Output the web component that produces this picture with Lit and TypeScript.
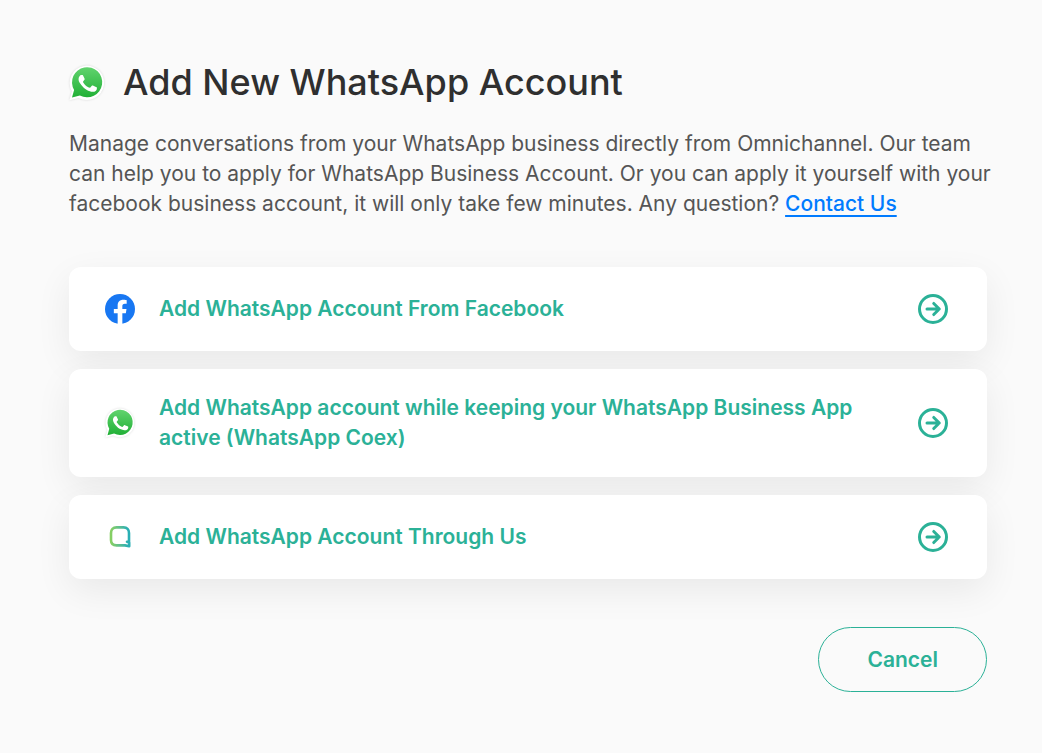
import { LitElement, html, css, svg } from "lit";
import { customElement } from "lit/decorators.js";

const whatsappIcon = (size: number, id: string) => html`
  <svg class="icon" width=${size} height=${size} viewBox="0 0 36 36" aria-hidden="true">
    <defs>
      <linearGradient id=${id} x1="0" y1="0" x2="0" y2="1">
        <stop offset="0" stop-color="#61d36e"></stop>
        <stop offset="1" stop-color="#21b036"></stop>
      </linearGradient>
    </defs>
    ${svg`
      <path class="halo" d="M.4 35.300 2.900 26.300A17.200 17.200 0 1 1 9.600 32.900Z"/>
      <path fill="url(#${id})" d="M3 32.600 5.100 24.900A15.100 15.100 0 1 1 10.900 30.500Z"/>
      <path transform="translate(1.900 1.600) scale(.89)" fill="#fff" d="M13.800 10.200c-.4-.8-.7-.8-1.100-.8h-.9c-.4 0-.9.1-1.400.6s-1.800 1.700-1.800 4.200 1.800 4.900 2.100 5.200c.3.3 3.500 5.600 8.700 7.600 4.300 1.700 5.200 1.300 6.100 1.300s3-1.200 3.400-2.400c.4-1.200.4-2.200.3-2.400-.1-.2-.5-.3-1-.6l-3.500-1.600c-.5-.2-.8-.3-1.200.2l-1.700 2c-.3.4-.6.4-1.100.1s-2.200-.8-4.100-2.500c-1.500-1.400-2.600-3-2.900-3.600-.3-.5 0-.8.2-1.100l1.500-1.900c.2-.3.1-.6 0-.9Z"/>
    `}
  </svg>
`;

const facebookIcon = html`
  <svg class="icon" width="30" height="30" viewBox="0 0 24 24" aria-hidden="true">
    <circle cx="12" cy="12" r="12" fill="#1877f2"></circle>
    <path fill="#fff" d="M16.671 15.469 17.203 12h-3.328V9.749c0-.949.465-1.874 1.956-1.874h1.513V4.922s-1.374-.235-2.686-.235c-2.741 0-4.533 1.662-4.533 4.669V12H7.078v3.469h3.047v8.531h3.750v-8.531Z"></path>
  </svg>
`;

const qontakIcon = html`
  <svg class="icon" width="30" height="30" viewBox="0 0 30 30" aria-hidden="true">
    <defs>
      <linearGradient id="bubble" x1="4" y1="0" x2="26" y2="0" gradientUnits="userSpaceOnUse">
        <stop offset="0.1" stop-color="#86cf63"></stop>
        <stop offset="0.5" stop-color="#5bbd92"></stop>
        <stop offset="0.85" stop-color="#2aafb4"></stop>
      </linearGradient>
    </defs>
    <path fill="none" stroke="url(#bubble)" stroke-width="2.600" stroke-linejoin="round" stroke-linecap="round"
      d="M22 19.800 24 20.500V11C24 7.400 22 5.400 18.500 5.400H11.500C8 5.400 6 7.400 6 11V18C6 21.500 8 23.400 11.500 23.400H20L24.200 24.200V20.500"></path>
  </svg>
`;

const arrowIcon = html`
  <svg class="icon" width="36" height="36" viewBox="0 0 24 24" fill="none" stroke="currentColor"
    stroke-width="2" stroke-linecap="round" stroke-linejoin="round" aria-hidden="true">
    <circle cx="12" cy="12" r="9"></circle>
    <path d="M8 12h8M12.500 8.300 16.200 12l-3.700 3.700"></path>
  </svg>
`;

const options = [
  { label: "Add WhatsApp Account From Facebook", icon: facebookIcon },
  {
    label: "Add WhatsApp account while keeping your WhatsApp Business App active (WhatsApp Coex)",
    icon: whatsappIcon(30, "wa-option"),
  },
  { label: "Add WhatsApp Account Through Us", icon: qontakIcon },
];

@customElement("app-root")
export class AppRoot extends LitElement {
  static styles = css`
    :host {
      display: block;
      box-sizing: border-box;
      min-height: 100vh;
      padding: 60px 55px 60px 69px;
      background: #fafafa;
      color: #555;
      font-family: Inter, "Liberation Sans", sans-serif;
      font-size: 21px;
      line-height: 30px;
    }
    .header {
      display: flex;
      align-items: center;
      gap: 18px;
    }
    .title {
      margin: 0;
      color: #2f2f2f;
      font-size: 36px;
      font-weight: 500;
      line-height: 45px;
    }
    .icon {
      display: block;
      flex: none;
      overflow: visible;
    }
    .halo {
      fill: #fff;
      filter: drop-shadow(0 0 1px rgba(0, 0, 0, 0.14));
    }
    .intro {
      margin: 24px -8px 48px 0;
    }
    .contact {
      color: #007bff;
      font-weight: 500;
      text-decoration: underline 2px;
      text-underline-offset: 4px;
    }
    .options {
      display: flex;
      flex-direction: column;
      gap: 18px;
      margin: 0;
      padding: 0;
      list-style: none;
    }
    .option {
      display: flex;
      align-items: center;
      gap: 24px;
      box-sizing: border-box;
      width: 100%;
      padding: 24px 36px;
      border: 0;
      border-radius: 12px;
      background: #fff;
      box-shadow: 0 12px 36px rgba(0, 0, 0, 0.07);
      color: #2bb197;
      font: inherit;
      font-weight: 600;
      text-align: left;
      cursor: pointer;
    }
    .label {
      flex: 1;
    }
    .footer {
      display: flex;
      justify-content: flex-end;
      margin-top: 48px;
    }
    .cancel {
      padding: 17px 48px 16px;
      border: 1px solid #2bb197;
      border-radius: 36px;
      background: transparent;
      color: #2bb197;
      font: inherit;
      font-weight: 600;
      cursor: pointer;
    }
  `;

  render() {
    return html`
      <main>
        <header class="header">
          ${whatsappIcon(36, "wa-title")}
          <h1 class="title">Add New WhatsApp Account</h1>
        </header>
        <p class="intro">
          Manage conversations from your WhatsApp business directly from Omnichannel. Our team can
          help you to apply for WhatsApp Business Account. Or you can apply it yourself with your
          facebook business account, it will only take few minutes. Any question?
          <a class="contact" href="#contact">Contact Us</a>
        </p>
        <ul class="options">
          ${options.map(
            ({ label, icon }) => html`
              <li>
                <button class="option" type="button">
                  ${icon}<span class="label">${label}</span>${arrowIcon}
                </button>
              </li>
            `
          )}
        </ul>
        <footer class="footer">
          <button class="cancel" type="button">Cancel</button>
        </footer>
      </main>
    `;
  }
}
